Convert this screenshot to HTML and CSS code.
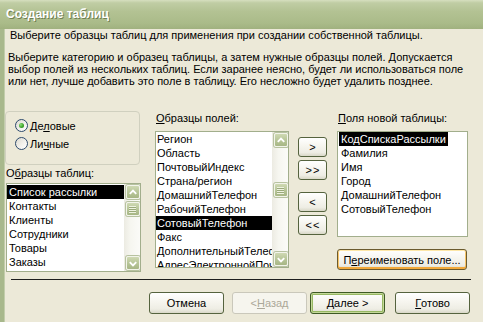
FILE: index.html
```html
<!DOCTYPE html>
<html lang="ru">
<head>
<meta charset="utf-8">
<title>Создание таблиц</title>
<link rel="stylesheet" href="styles.css">
</head>
<body>
<div class="window">
  <div class="titlebar">Создание таблиц</div>
  <div class="client">
    <div class="header">Выберите образцы таблиц для применения при создании собственной таблицы.</div>
    <div class="desc">Выберите категорию и образец таблицы, а затем нужные образцы полей. Допускается<br>выбор полей из нескольких таблиц. Если заранее неясно, будет ли использоваться поле<br>или нет, лучше добавить это поле в таблицу. Его несложно будет удалить позднее.</div>

    <div class="main">
      <div class="col col-tables">
        <div class="groupbox">
          <div class="radio-row"><span class="radio checked"></span><span>Де<u>л</u>овые</span></div>
          <div class="radio-row"><span class="radio"></span><span>Ли<u>ч</u>ные</span></div>
        </div>
        <div class="label label-tables">О<u>б</u>разцы таблиц:</div>
        <div class="listbox list-tables">
          <div class="items">
            <div class="item sel">Список рассылки</div>
            <div class="item">Контакты</div>
            <div class="item">Клиенты</div>
            <div class="item">Сотрудники</div>
            <div class="item">Товары</div>
            <div class="item">Заказы</div>
          </div>
          <div class="scrollbar">
            <div class="sbtn"><svg viewBox="0 0 13 13" width="13" height="13"><polyline points="3,8 6.5,4.5 10,8" fill="none" stroke="#fff" stroke-width="2"/></svg></div>
            <div class="thumb" style="margin-top:3px"><span class="grip"></span></div>
            <div class="sfill"></div>
            <div class="sbtn"><svg viewBox="0 0 13 13" width="13" height="13"><polyline points="3,5 6.5,8.5 10,5" fill="none" stroke="#fff" stroke-width="2"/></svg></div>
          </div>
        </div>
      </div>

      <div class="col col-fields">
        <div class="label"><u>О</u>бразцы полей:</div>
        <div class="listbox list-fields">
          <div class="items">
            <div class="item">Регион</div>
            <div class="item">Область</div>
            <div class="item">ПочтовыйИндекс</div>
            <div class="item">Страна/регион</div>
            <div class="item">ДомашнийТелефон</div>
            <div class="item">РабочийТелефон</div>
            <div class="item sel">СотовыйТелефон</div>
            <div class="item">Факс</div>
            <div class="item">ДополнительныйТелефон</div>
            <div class="item">АдресЭлектроннойПочты</div>
          </div>
          <div class="scrollbar">
            <div class="sbtn"><svg viewBox="0 0 13 13" width="13" height="13"><polyline points="3,8 6.5,4.5 10,8" fill="none" stroke="#fff" stroke-width="2"/></svg></div>
            <div class="thumb" style="margin-top:36px"><span class="grip"></span></div>
            <div class="sfill"></div>
            <div class="sbtn"><svg viewBox="0 0 13 13" width="13" height="13"><polyline points="3,5 6.5,8.5 10,5" fill="none" stroke="#fff" stroke-width="2"/></svg></div>
          </div>
        </div>
      </div>

      <div class="col col-move">
        <div class="btn mbtn">&gt;</div>
        <div class="btn mbtn">&gt;&gt;</div>
        <div class="btn mbtn gap-big">&lt;</div>
        <div class="btn mbtn">&lt;&lt;</div>
      </div>

      <div class="col col-new">
        <div class="label"><u>П</u>оля новой таблицы:</div>
        <div class="listbox list-new">
          <div class="items">
            <div class="item sel narrow">КодСпискаРассылки</div>
            <div class="item">Фамилия</div>
            <div class="item">Имя</div>
            <div class="item">Город</div>
            <div class="item">ДомашнийТелефон</div>
            <div class="item">СотовыйТелефон</div>
          </div>
        </div>
        <div class="btn hot rename">П<u>е</u>реименовать поле...</div>
      </div>
    </div>

    <div class="separator"></div>

    <div class="footer">
      <div class="btn fbtn">Отмена</div>
      <div class="btn fbtn disabled back">&lt; <u>Н</u>азад</div>
      <div class="btn fbtn default next"><u>Д</u>алее &gt;</div>
      <div class="btn fbtn done"><u>Г</u>отово</div>
    </div>
  </div>
</div>
</body>
</html>
```

FILE: styles.css
```css
* { box-sizing: border-box; }

body {
  margin: 0;
  width: 483px;
  height: 322px;
  overflow: hidden;
  background: #ece9d8;
  font-family: "Liberation Sans", Arial, sans-serif;
  font-size: 11px;
  color: #000;
}

u { text-decoration: underline; text-underline-offset: 1px; }

.window {
  width: 483px;
  height: 322px;
  display: flex;
  flex-direction: column;
}

.titlebar {
  flex: none;
  height: 29px;
  padding-left: 6px;
  background: linear-gradient(to bottom, #d6dfbf 0%, #c0cda4 10%, #b3c293 40%, #aabb89 80%, #a0b17f 100%);
  color: #fff;
  font-weight: bold;
  font-size: 12px;
  line-height: 29px;
  text-shadow: 1px 1px 0 #6f7f52;
}

.client {
  flex: 1;
  border-left: 4px solid #a8b88c;
  box-shadow: inset 1px 0 0 #c2cdab;
}

.header {
  height: 13px;
  line-height: 13px;
  padding-left: 6px;
  white-space: nowrap;
}

.desc {
  margin-top: 9px;
  padding-left: 4px;
  line-height: 12px;
  white-space: nowrap;
}

.main {
  margin-top: 24px;
  display: flex;
  align-items: flex-start;
  padding-left: 1px;
}

.col { display: flex; flex-direction: column; }

.col-tables { width: 136px; }

.groupbox {
  width: 135px;
  height: 54px;
  border: 1px solid #d0d0bf;
  border-radius: 4px;
  padding: 7px 0 0 9px;
  display: flex;
  flex-direction: column;
  gap: 5px;
}

.radio-row {
  display: flex;
  align-items: center;
  height: 13px;
  gap: 2px;
}

.radio {
  width: 13px;
  height: 13px;
  border-radius: 50%;
  border: 1px solid #2c4a6c;
  background: linear-gradient(135deg, #dcdad0 0%, #f4f3ee 60%, #ffffff 100%);
  display: flex;
  align-items: center;
  justify-content: center;
}

.radio.checked::after {
  content: "";
  width: 5px;
  height: 5px;
  border-radius: 50%;
  background: radial-gradient(circle at 35% 35%, #8fe07a 0%, #3fa52c 55%, #217a14 100%);
}

.label {
  height: 13px;
  line-height: 13px;
  white-space: nowrap;
  padding-left: 1px;
}

.label-tables { margin-top: 2px; padding-left: 1px; }

.listbox {
  display: flex;
  border: 1px solid #a2ae8c;
  background: #fff;
  overflow: hidden;
}

.items {
  flex: 1;
  min-width: 0;
  overflow: hidden;
}

.item {
  height: 14px;
  line-height: 14px;
  padding-left: 2px;
  white-space: nowrap;
  overflow: hidden;
}

.item.sel { background: #000; color: #fff; }
.item.narrow { width: 109px; }

.list-tables { width: 135px; height: 89px; margin-top: 3px; margin-left: 1px; }
.list-tables .items { padding-top: 1px; }

.col-fields { width: 134px; margin-left: 14px; padding-top: 1px; }
.list-fields { width: 134px; height: 137px; margin-top: 6px; }
.list-fields .item { padding-left: 1px; }

.col-new { width: 131px; margin-left: 10px; padding-top: 1px; }
.list-new { width: 131px; height: 106px; margin-top: 6px; }
.list-new .items { padding-left: 1px; }

.scrollbar {
  width: 16px;
  flex: none;
  display: flex;
  flex-direction: column;
  align-items: center;
  padding: 1px 0 1px 1px;
  background: linear-gradient(to right, #ecebe2 0%, #f6f6f0 40%, #fbfbf8 100%);
}

.sbtn, .thumb {
  width: 14px;
  flex: none;
  border: 1px solid #f2f4ea;
  border-radius: 2px;
  background: linear-gradient(to bottom, #cfd9b3 0%, #b8c699 50%, #a7b685 100%);
  box-shadow: 0 0 0 1px #b7c2a0;
  display: flex;
  align-items: center;
  justify-content: center;
}

.sbtn { height: 14px; }
.thumb { height: 14px; }
.sfill { flex: 1; }

.grip {
  width: 7px;
  height: 7px;
  background: repeating-linear-gradient(to bottom, #eef2e0 0, #eef2e0 1px, #9aa97a 1px, #9aa97a 2px);
}

.btn {
  display: flex;
  align-items: center;
  justify-content: center;
  border: 1px solid #55633e;
  border-radius: 3px;
  background: linear-gradient(to bottom, #ffffff 0%, #f7f6f0 40%, #eeede4 80%, #d9d8c8 100%);
  white-space: nowrap;
}

.col-move { width: 29px; margin-left: 9px; padding-top: 26px; }
.mbtn { width: 29px; height: 20px; margin-bottom: 3px; letter-spacing: 1px; padding-left: 1px; }
.mbtn.gap-big { margin-top: 9px; }

.rename {
  margin-top: 12px;
  width: 130px;
  height: 21px;
  border-color: #6b5b2e;
  box-shadow: inset 0 1px 0 #fde7a8, inset 0 -2px 0 #f2a93b, inset 1px 0 0 #f8c56a, inset -1px 0 0 #f8c56a;
}

.separator {
  margin: 7px 0 0 7px;
  width: 460px;
  height: 1px;
  background: #1e1e1e;
}

.footer {
  margin-top: 12px;
  display: flex;
  padding-left: 145px;
}

.fbtn { width: 75px; height: 22px; }
.back { margin-left: 8px; }
.next { margin-left: 3px; }
.done { margin-left: 10px; }

.disabled {
  color: #aca899;
  border-color: #cac8bb;
  background: #f6f5ee;
}

.default {
  border-color: #3e5a24;
  box-shadow: inset 0 0 0 1px #c5d99a, inset 0 0 0 2px #97b863;
}
```
